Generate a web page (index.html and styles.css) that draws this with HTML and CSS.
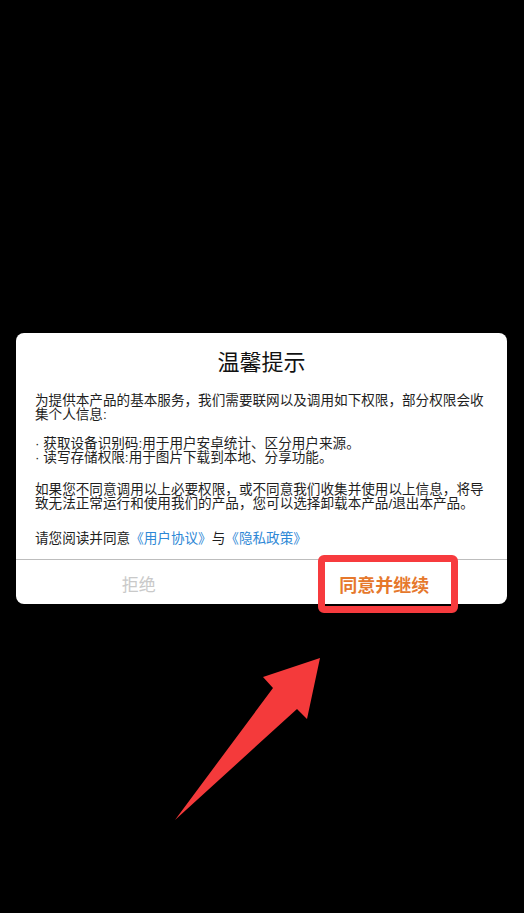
FILE: index.html
```html
<html>
<head>
	<meta charset="utf-8">
	<link rel="stylesheet" href="styles.css">
</head>
<body>
	<div class="screen">
		<div class="dialog">
			<h3 class="title">温馨提示</h3>
			<div class="content">
				<p class="p1">为提供本产品的基本服务，我们需要联网以及调用如下权限，部分权限会收集个人信息:</p>
				<p class="p2">· 获取设备识别码:用于用户安卓统计、区分用户来源。</p>
				<p>· 读写存储权限:用于图片下载到本地、分享功能。</p>
				<p class="p3">如果您不同意调用以上必要权限，或不同意我们收集并使用以上信息，将导致无法正常运行和使用我们的产品，您可以选择卸载本产品/退出本产品。</p>
				<p class="p4">请您阅读并同意<a href="#">《用户协议》</a>与<a href="#">《隐私政策》</a></p>
			</div>
			<div class="btns">
				<div class="btn no">拒绝</div>
				<div class="btn yes">同意并继续</div>
			</div>
			<div class="mark"></div>
		</div>
		<svg class="arrow" width="524" height="913" viewBox="0 0 524 913">
			<polygon points="320,658 263,677 273,688 175,820 297,709 307,719" fill="#f43a3b"/>
		</svg>
	</div>
</body>
</html>
```

FILE: styles.css
```css
html,body{margin:0;padding:0;background:#000;}
body{font-family:"Liberation Sans","Noto Sans CJK SC",sans-serif;}
.screen{position:relative;width:524px;height:913px;overflow:hidden;padding-top:333px;box-sizing:border-box;}
.dialog{position:relative;margin-left:16px;width:491px;background:#fff;border-radius:8px;}
.title{margin:0;padding-top:15px;font-size:22px;line-height:30px;font-weight:normal;text-align:center;color:#111;}
.content{padding:0 19px 13px 19px;font-size:13.6px;line-height:14px;color:#1e1e1e;}
.content p{margin:0;}
.p1{margin-top:16px !important;}
.p2{margin-top:15px !important;}
.p3{margin-top:18px !important;}
.p4{margin-top:21px !important;}
.content a{color:#2e88d6;text-decoration:none;}
.btns{display:flex;border-top:1px solid #bdbdbd;height:44px;}
.btn{flex:1;display:flex;align-items:center;justify-content:center;padding-top:3px;box-sizing:border-box;}
.no{font-size:17px;color:#c9c9c9;}
.yes{font-size:18px;color:#e6782c;font-weight:bold;}
.mark{position:absolute;left:302px;top:222px;width:140px;height:58px;border:7px solid #f73b3e;border-radius:6px;box-sizing:border-box;}
.arrow{position:absolute;left:0;top:0;}
```
